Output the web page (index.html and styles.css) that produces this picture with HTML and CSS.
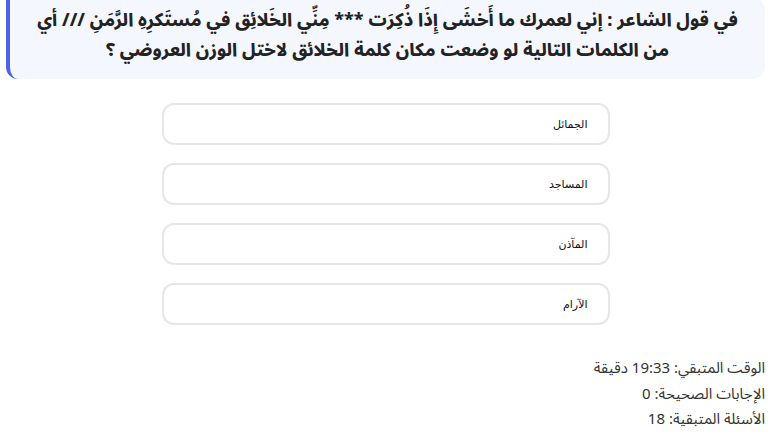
FILE: index.html
```html
<!DOCTYPE html>
<html lang="ar" dir="rtl">
<head>
    <meta charset="UTF-8">
    <meta name="viewport" content="width=device-width, initial-scale=1.0">
    <title>اختبار العروض</title>
    <link rel="stylesheet" href="styles.css">
</head>
<body>
    <div class="question-box">
        <p class="question">في قول الشاعر : إني لعمرك ما أَخشَى إِذَا ذُكِرَت *** مِنِّي الخَلائِق في مُستَكرِهِ الرَّمَنِ /// أي من الكلمات التالية لو وضعت مكان كلمة الخلائق لاختل الوزن العروضي ؟</p>
    </div>
    <div class="options">
        <button class="option">الجمائل</button>
        <button class="option">المساجد</button>
        <button class="option">المآذن</button>
        <button class="option">الآرام</button>
    </div>
    <div class="stats">
        <p>الوقت المتبقي: 19:33 دقيقة</p>
        <p>الإجابات الصحيحة: 0</p>
        <p>الأسئلة المتبقية: 18</p>
    </div>
</body>
</html>
```

FILE: styles.css
```css
body {
    margin: 0;
    padding: 0 16px 0 6px;
    background-color: #fff;
    font-family: "Noto Sans Arabic", "Noto Sans", sans-serif;
}
.question-box {
    background-color: #f5f7ff;
    border-left: 4px solid #4a63e7;
    border-radius: 0 12px 12px 12px;
    padding: 7px 20px 14px;
    margin-top: -2px;
}
.question {
    margin: 0;
    text-align: center;
    font-size: 18px;
    font-weight: 800;
    line-height: 30px;
    color: #222;
}
.options {
    display: flex;
    flex-direction: column;
    align-items: center;
    gap: 18px;
    margin-top: 24px;
}
.option {
    width: 448px;
    height: 42px;
    background-color: #fff;
    border: 2px solid #e5e7eb;
    border-radius: 12px;
    text-align: right;
    padding: 0 20px;
    font-family: "DejaVu Sans", sans-serif;
    font-size: 11px;
    color: #111;
}
.stats {
    margin-top: 31px;
}
.stats p {
    margin: 0;
    line-height: 25.5px;
    font-size: 15px;
    color: #333;
}
```
